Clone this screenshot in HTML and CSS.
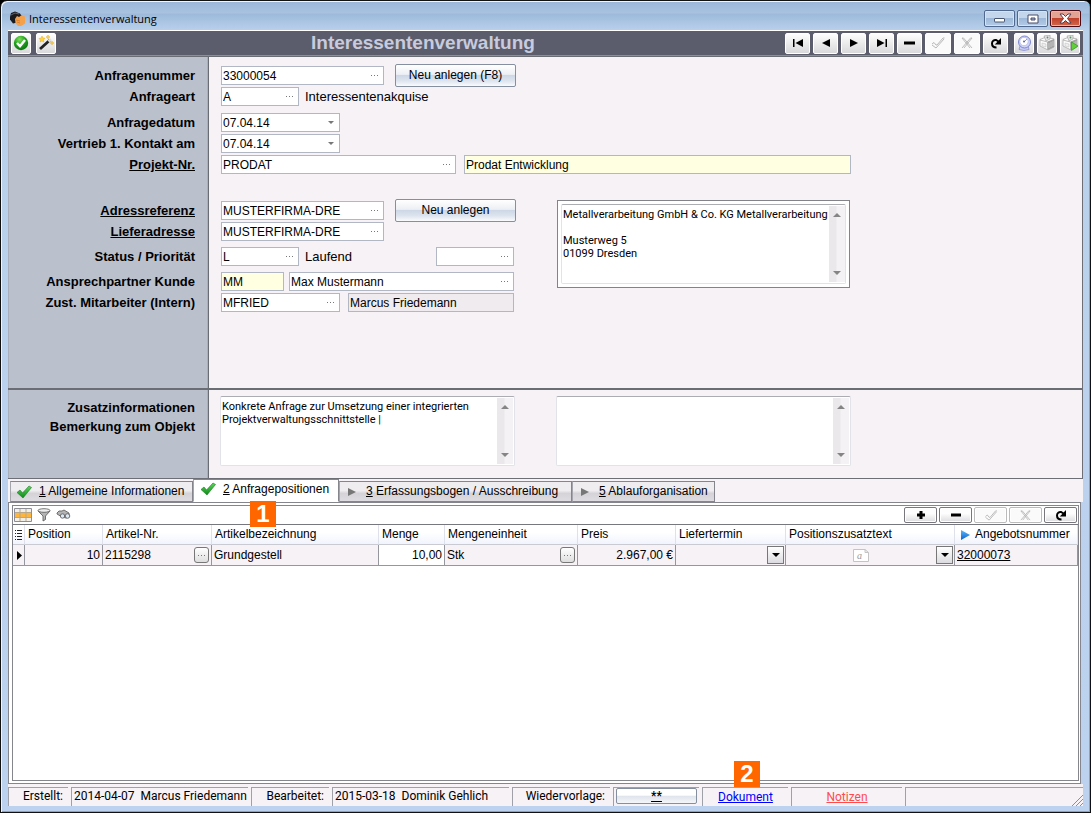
FILE: index.html
```html
<!DOCTYPE html>
<html lang="de">
<head>
<meta charset="utf-8">
<title>Interessentenverwaltung</title>
<link rel="stylesheet" href="styles.css">
</head>
<body>
<svg class="defs" width="0" height="0" aria-hidden="true">
  <defs>
    <radialGradient id="gGreen" cx=".4" cy=".25" r=".8"><stop offset="0" stop-color="#7ede5c"/><stop offset=".5" stop-color="#1fa01c"/><stop offset="1" stop-color="#0a6e10"/></radialGradient>
    <linearGradient id="gCheck" x1="0" y1="0" x2="0" y2="1"><stop offset="0" stop-color="#5fd45f"/><stop offset="1" stop-color="#0c8a18"/></linearGradient>
    <linearGradient id="gBlue" x1="0" y1="0" x2="0" y2="1"><stop offset="0" stop-color="#5db8f8"/><stop offset="1" stop-color="#0a62d0"/></linearGradient>
    <symbol id="check" viewBox="0 0 16 14"><path d="M1 7.500 4 5l2.500 3L13 1l2.500 1.500L7 13z" fill="url(#gCheck)" stroke="#1a7a20" stroke-width=".6"/></symbol>
    <symbol id="checkOff" viewBox="0 0 14 12"><path d="M1 7l2-1.500L5 8l1 0 6-7h1.500M1 8l4 3 8-9" fill="none" stroke="#b0b0b0" stroke-width=".9"/></symbol>
    <symbol id="crossOff" viewBox="0 0 12 12"><path d="M1 1h1.500l8.500 10M1 1l8 10M11 1H9.500L1 11M11 1 3 11" fill="none" stroke="#b4b4b4" stroke-width=".9"/></symbol>
    <symbol id="redo" viewBox="0 0 12 12"><path d="M6.500 10.500C3 10.500 2 8.500 2 6.500 2 4 4 2.700 6 3l2.500 1.500" fill="none" stroke="#000" stroke-width="2"/><path d="M11 1v6.500H4.800z"/></symbol>
    <symbol id="printer" viewBox="0 0 16 16"><path d="M1 4.500 7 2l8 2v8l-6 3-8-4z" fill="#fbfbfb" stroke="#aaa" stroke-width=".8"/><path d="M8.500 6.500 15 4v8l-6 3z" fill="#a2a2a2"/><path d="M10 8v5M12 7v5M14 6v5" stroke="#d8d8d8" stroke-width=".7"/><path d="M1 5l7.500 2V15" fill="none" stroke="#aaa" stroke-width=".8"/><path d="M3 8l4 1v3l-4-1z" fill="#eee" stroke="#bbb" stroke-width=".5"/><path d="M5 1l6-1v4L7 6z" fill="#e4e4e4" stroke="#999" stroke-width=".6"/><circle cx="8.500" cy="2.500" r=".9" fill="#4b9b5b"/></symbol>
    <symbol id="tri" viewBox="0 0 8 8"><path d="M0 0l8 4-8 4z" fill="#777"/></symbol>
  </defs>
</svg>
<main class="window">
  <header class="titlebar">
    <svg class="app-icon" width="17" height="16" viewBox="0 0 17 16"><path d="M1 6 2 2 6 .5l5 2 2 3-5 6-4 1-3-4z" fill="#1b1b1e"/><path d="M2 4l4-2 4 1" stroke="#666" fill="none"/><path d="M6 8l2-3 2 1 2-1.500 4 1v7l-4 2.500H9L6.500 12z" fill="#f5a04a"/><path d="M7 9l4 1M8 11l3 1" stroke="#c9742c" fill="none" stroke-width=".7"/></svg>
    <span class="title-text">Interessentenverwaltung</span>
    <div class="caption-buttons">
      <button class="cap" aria-label="Minimieren"><svg width="12" height="8" viewBox="0 0 12 8"><rect x=".5" y="3.500" width="10" height="3.500" rx=".5" fill="#fff" stroke="#4a5670"/></svg></button>
      <button class="cap" aria-label="Maximieren"><svg width="12" height="10" viewBox="0 0 12 10"><path fill-rule="evenodd" d="M1 1h10v8H1zM4 4v2h4V4z" fill="#fff" stroke="#4a4a66"/></svg></button>
      <button class="cap close" aria-label="Schließen"><svg width="13" height="11" viewBox="0 0 13 11"><path d="M1 1h3l2.500 2.500L9 1h3L8.500 5.500 12 10H9L6.500 7.500 4 10H1l3.500-4.500z" fill="#fff" stroke="#5c3a48"/></svg></button>
    </div>
  </header>

  <div class="toolbar">
    <button class="tool small" aria-label="OK"><svg width="16" height="16" viewBox="0 0 16 16"><circle cx="8" cy="8" r="7.200" fill="url(#gGreen)"/><path d="M4 8l3 3.200L12 5" fill="none" stroke="#fff" stroke-width="2.500"/></svg></button>
    <button class="tool small" aria-label="Assistent"><svg width="16" height="16" viewBox="0 0 16 16"><path d="M2 14 12 5" stroke="#222" stroke-width="2.800"/><path d="M10.500 6.500 13 4.200" stroke="#ddd" stroke-width="2.800"/><path d="M4 1l1 2 2 .2L5.500 5l.3 2L4 6 2 7l.4-2L1 3.500l2-.3zM10 0l.6 1.400L12 2l-1.400.6L10 4l-.6-1.400L8 2l1.400-.6zM14 6l.5 1.500L16 8l-1.500.5L14 10l-.5-1.500L12 8l1.500-.5z" fill="#ffd43a" stroke="#d79a14" stroke-width=".4"/></svg></button>
    <h1>Interessentenverwaltung</h1>
    <div class="nav">
      <button class="tool" aria-label="Erster"><svg width="12" height="10" viewBox="0 0 12 10"><path d="M1 1h1.500v8H1zM11 1v8L3.500 5z"/></svg></button>
      <button class="tool" aria-label="Zurück"><svg width="10" height="10" viewBox="0 0 10 10"><path d="M9 1v8L1 5z"/></svg></button>
      <button class="tool" aria-label="Weiter"><svg width="10" height="10" viewBox="0 0 10 10"><path d="M1 1v8l8-4z"/></svg></button>
      <button class="tool" aria-label="Letzter"><svg width="12" height="10" viewBox="0 0 12 10"><path d="M9.500 1H11v8H9.500zM1 1v8l7.500-4z"/></svg></button>
      <button class="tool" aria-label="Löschen"><svg width="12" height="4" viewBox="0 0 12 4"><path d="M0 .5h11v3H0z"/></svg></button>
      <button class="tool off" aria-label="Speichern"><svg width="14" height="12"><use href="#checkOff"/></svg></button>
      <button class="tool off" aria-label="Abbrechen"><svg width="12" height="12"><use href="#crossOff"/></svg></button>
      <button class="tool" aria-label="Aktualisieren"><svg width="12" height="12"><use href="#redo"/></svg></button>
    </div>
    <div class="extras">
      <button class="tool small" aria-label="Vorschau"><svg width="15" height="16" viewBox="0 0 15 16"><path d="M3 11l-1 3.500 5 1 5-1-1-4" fill="#c9cdf3" stroke="#8087cc" stroke-width=".7"/><circle cx="7.500" cy="7" r="6" fill="#d0d5fa" stroke="#7d86cf"/><circle cx="7" cy="6.500" r="4.200" fill="#fff" stroke="#aab0e0" stroke-width=".7"/><path d="M7 7l3-3" stroke="#777cc4" stroke-width=".8"/><circle cx="7" cy="6.500" r=".9" fill="#4a52b8"/></svg></button>
      <button class="tool small" aria-label="Drucken"><svg width="16" height="16"><use href="#printer"/></svg></button>
      <button class="tool small" aria-label="Direkt drucken"><svg width="16" height="16" viewBox="0 0 16 16"><use href="#printer" width="16" height="16"/><path d="M9.500 7v8.500L16 11z" fill="#62ce3a" stroke="#2f9a1d" stroke-width=".7"/></svg></button>
    </div>
  </div>

  <form class="form">
    <section class="section first">
      <div class="block">
        <div class="row"><label for="nr">Anfragenummer</label>
          <span class="field w163"><input id="nr" value="33000054"><button type="button" class="dots" aria-label="Auswahl"></button></span>
          <button type="button" class="action">Neu anlegen (F8)</button></div>
        <div class="row"><label for="art">Anfrageart</label>
          <span class="field w78"><input id="art" value="A"><button type="button" class="dots" aria-label="Auswahl"></button></span><span class="plain">Interessentenakquise</span></div>
        <div class="row gap-m"><label for="dat">Anfragedatum</label>
          <span class="field w119"><input id="dat" value="07.04.14"><button type="button" class="drop" aria-label="Kalender"></button></span></div>
        <div class="row"><label for="kon">Vertrieb 1. Kontakt am</label>
          <span class="field w119"><input id="kon" value="07.04.14"><button type="button" class="drop" aria-label="Kalender"></button></span></div>
        <div class="row"><label for="prj" class="link">Projekt-Nr.</label>
          <span class="field w235"><input id="prj" value="PRODAT"><button type="button" class="dots" aria-label="Auswahl"></button></span>
          <span class="field yellow w387"><input aria-label="Projektbezeichnung" value="Prodat Entwicklung"></span></div>
      </div>
      <div class="split">
        <div class="block rows2">
          <div class="row"><label for="adr" class="link">Adressreferenz</label>
            <span class="field w163"><input id="adr" value="MUSTERFIRMA-DRE"><button type="button" class="dots" aria-label="Auswahl"></button></span>
            <button type="button" class="action">Neu anlegen</button></div>
          <div class="row"><label for="lief" class="link">Lieferadresse</label>
            <span class="field w163"><input id="lief" value="MUSTERFIRMA-DRE"><button type="button" class="dots" aria-label="Auswahl"></button></span></div>
          <div class="row gap-s"><label for="sta">Status / Priorität</label>
            <span class="field w78"><input id="sta" value="L"><button type="button" class="dots" aria-label="Auswahl"></button></span><span class="plain">Laufend</span>
            <span class="field w78 push"><input aria-label="Priorität"><button type="button" class="dots" aria-label="Auswahl"></button></span></div>
          <div class="row gap-s near"><label for="asp">Ansprechpartner Kunde</label>
            <span class="field yellow w63"><input id="asp" value="MM"></span>
            <span class="field grow"><input aria-label="Name Ansprechpartner" value="Max Mustermann"><button type="button" class="dots" aria-label="Auswahl"></button></span></div>
          <div class="row"><label for="mit">Zust. Mitarbeiter (Intern)</label>
            <span class="field w119"><input id="mit" value="MFRIED"><button type="button" class="dots" aria-label="Auswahl"></button></span>
            <span class="field gray grow"><input aria-label="Name Mitarbeiter" value="Marcus Friedemann"></span></div>
        </div>
        <div class="address">
          <div class="memo"><textarea aria-label="Adresse">Metallverarbeitung GmbH &amp; Co. KG Metallverarbeitung

Musterweg 5
01099 Dresden</textarea><span class="scroll"><i class="up"></i><i class="down"></i></span></div>
        </div>
      </div>
    </section>
    <section class="section second">
      <div class="caption">
        <label for="zus">Zusatzinformationen</label>
        <label for="bem">Bemerkung zum Objekt</label>
      </div>
      <div class="memo note"><textarea id="zus">Konkrete Anfrage zur Umsetzung einer integrierten
Projektverwaltungsschnittstelle |</textarea><span class="scroll"><i class="up"></i><i class="down"></i></span></div>
      <div class="memo note"><textarea id="bem"></textarea><span class="scroll"><i class="up"></i><i class="down"></i></span></div>
    </section>
  </form>

  <nav class="tabs">
    <button class="tab t1"><svg width="16" height="14"><use href="#check"/></svg><span><u>1</u> Allgemeine Informationen</span></button>
    <button class="tab t2 active"><svg width="16" height="14"><use href="#check"/></svg><span><u>2</u> Anfragepositionen</span><b class="badge one">1</b></button>
    <button class="tab t3"><svg class="arrow" width="8" height="8"><use href="#tri"/></svg><span><u>3</u> Erfassungsbogen / Ausschreibung</span></button>
    <button class="tab t4"><svg class="arrow" width="8" height="8"><use href="#tri"/></svg><span><u>5</u> Ablauforganisation</span></button>
  </nav>

  <section class="panel">
    <div class="inner">
      <div class="gridbar">
        <button class="ico" aria-label="Tabelle"><svg width="18" height="14" viewBox="0 0 18 14"><path d="M.5.500h17v13H.5z" fill="#f2efe9" stroke="#8d8d95"/><path d="M1 4.500h16v5H1z" fill="#ffb43c"/><path d="M6 1v12M12 1v12M1 4.500h16M1 9.500h16" stroke="#b9a78a"/></svg></button>
        <button class="ico" aria-label="Filter"><svg width="14" height="14" viewBox="0 0 14 14"><path d="M1 3l5 5v5l2.500-1.500V8L13 3z" fill="#b4b4b4" stroke="#555" stroke-width=".8"/><ellipse cx="7" cy="2.500" rx="6" ry="1.800" fill="#eee" stroke="#555" stroke-width=".8"/></svg></button>
        <button class="ico" aria-label="Suchen"><svg width="15" height="12" viewBox="0 0 15 12"><path d="M1 4l2-2 3 0 2-1 5 3v4l-3 1-4-1-5-3z" fill="#b4b4b4" stroke="#555" stroke-width=".8"/><circle cx="6.500" cy="7" r="2.200" fill="#dce8f4" stroke="#555" stroke-width=".8"/><circle cx="11.500" cy="7" r="2.300" fill="#dce8f4" stroke="#555" stroke-width=".8"/></svg></button>
        <div class="rownav">
          <button class="mini" aria-label="Hinzufügen"><svg width="10" height="10" viewBox="0 0 10 10"><path d="M3.500 1h3v2.500H9v3H6.500V9h-3V6.500H1v-3h2.500z"/></svg></button>
          <button class="mini" aria-label="Entfernen"><svg width="10" height="4" viewBox="0 0 10 4"><path d="M0 .5h10v3H0z"/></svg></button>
          <button class="mini off" aria-label="Speichern"><svg width="14" height="11"><use href="#checkOff"/></svg></button>
          <button class="mini off" aria-label="Abbrechen"><svg width="11" height="11"><use href="#crossOff"/></svg></button>
          <button class="mini" aria-label="Aktualisieren"><svg width="12" height="12"><use href="#redo"/></svg></button>
        </div>
      </div>
      <table class="grid">
        <colgroup><col class="c0"><col class="c1"><col class="c2"><col class="c3"><col class="c4"><col class="c5"><col class="c6"><col class="c7"><col class="c8"><col></colgroup>
        <thead><tr>
          <th class="mark"><svg width="8" height="10" viewBox="0 0 8 10"><path d="M0 .5h1M2 .5h5M0 3.500h1M2 3.500h5M0 6.500h1M2 6.500h5M0 9.500h1M2 9.500h5" stroke="#222"/></svg></th>
          <th>Position</th><th>Artikel-Nr.</th><th>Artikelbezeichnung</th><th>Menge</th><th>Mengeneinheit</th><th>Preis</th><th>Liefertermin</th><th>Positionszusatztext</th>
          <th class="last"><svg width="10" height="10" viewBox="0 0 10 10"><path d="M1 0l9 5-9 5z" fill="url(#gBlue)"/></svg>Angebotsnummer</th>
        </tr></thead>
        <tbody><tr>
          <td class="mark"><svg width="5" height="9" viewBox="0 0 5 9"><path d="M0 0l5 4.500L0 9z"/></svg></td>
          <td class="num">10</td>
          <td><div class="cell">2115298<button class="more" aria-label="Artikel wählen"></button></div></td>
          <td>Grundgestell</td>
          <td class="num edit">10,00</td>
          <td><div class="cell">Stk<button class="more" aria-label="Einheit wählen"></button></div></td>
          <td class="num">2.967,00 €</td>
          <td><div class="cell end"><button class="combo" aria-label="Termin wählen"></button></div></td>
          <td><div class="cell mid"><svg width="16" height="13" viewBox="0 0 16 13"><path d="M.5.500H12l3.500 3v9H.5zM12 .5v3h3.500" fill="#fff" stroke="#c4c4c4"/><text x="4" y="10" class="glyph">a</text></svg><button class="combo" aria-label="Text wählen"></button></div></td>
          <td class="ref"><a href="#">32000073</a></td>
        </tr></tbody>
      </table>
    </div>
  </section>

  <footer class="status">
    <span class="s0 right">Erstellt:</span>
    <span class="s1">2014-04-07&nbsp; Marcus Friedemann</span>
    <span class="s2 right">Bearbeitet:</span>
    <span class="s3">2015-03-18&nbsp; Dominik Gehlich</span>
    <span class="s4 right">Wiedervorlage:</span>
    <span class="s5"><button class="stars"><u>**</u></button></span>
    <span class="s6 center"><a class="doc" href="#">Dokument</a><b class="badge two">2</b></span>
    <span class="s7 center"><a class="notes" href="#">Notizen</a></span>
    <span class="s8"><svg width="12" height="12" viewBox="0 0 12 12"><path d="M1 12 12 1M5 12l7-7M9 12l3-3" stroke="#8d8d95"/></svg></span>
  </footer>
</main>
</body>
</html>
```
FILE: styles.css
```css
* { box-sizing: border-box; }
body { margin: 0; background: #000; font: 12px/15px "Liberation Sans", Arial, sans-serif; color: #000; }
button, input, textarea { font: inherit; color: inherit; margin: 0; padding: 0; border: 0; background: none; }
button { display: flex; align-items: center; justify-content: center; flex: none; }
svg { display: block; flex: none; }
.defs { position: absolute; }

.window {
  display: flex; flex-direction: column; min-height: 100vh;
  border: 1px solid #111; border-radius: 7px 7px 0 0; padding: 0 7px 6px;
  background: linear-gradient(#9ab5d9, #a8c2e0 12px, #9dbadb 13px, #bad1ec 30px, #bcd2ee);
  box-shadow: inset 1px 1px 0 #eef5fc, inset -1px -1px 0 #37c6e4;
}

.titlebar { display: flex; align-items: center; height: 29px; padding: 6px 0 0 1px; }
.title-text { font: 11px/16px "Open Sans", sans-serif; margin-left: 3px; }
.caption-buttons { display: flex; gap: 2px; margin-left: auto; padding-right: 2px; }
.cap { width: 31px; height: 17px; border: 1px solid #52698f; border-radius: 2px; background: linear-gradient(#c4d6ec 50%, #9db8d8 50%, #b4cbe8); box-shadow: inset 0 0 0 1px #d5e3f4; }
.cap.close { border-color: #4d0c14; background: linear-gradient(#e3a394 50%, #c0412c 50%, #d2694c); box-shadow: inset 0 0 0 1px #e9b5a8; }

.toolbar { display: flex; align-items: center; height: 26px; padding: 0 3px; background: #5b5d6c; border-top: 1px solid #fff; border-bottom: 1px solid #8e8e96; }
.toolbar h1 { margin: 0 0 0 255px; font: bold 19px/22px "Liberation Sans", Arial, sans-serif; color: #c8cbdd; }
.tool { width: 25px; height: 21px; border: 1px solid #fff; border-radius: 2px; background: linear-gradient(#fdfdfd, #d9d9dc); }
.tool.small { width: 20px; }
.tool.small + .tool.small { margin-left: 5px; }
.tool.off { width: 26px; background: #fafafa; }
.nav { display: flex; gap: 3px; margin-left: auto; }
.extras { display: flex; margin-left: 6px; }
.extras .tool.small + .tool.small { margin-left: 3px; }

.form { border-right: 1px solid #6e6e76; border-bottom: 1px solid #6e6e76; }
.section { background: linear-gradient(to right, #a9aebb 1px, #bac1cd 1px 199px, #a9aebb 199px 200px, #6a6d73 200px 201px, #f6f2f6 201px); }
.first { min-height: 334px; padding-top: 9px; border-top: 1px solid #6a6d73; border-bottom: 2px solid #6a6d73; }
.block { display: flex; flex-direction: column; gap: 2px; }
.split { display: flex; align-items: flex-start; gap: 43px; margin-top: 26px; }
.rows2 { width: 506px; padding-top: 1px; }
.row { display: flex; align-items: center; gap: 8px; height: 19px; }
.row.gap-s { margin-top: 4px; }
.row.gap-m { margin-top: 5px; }
.row.near { gap: 5px; }
.row > label { width: 187px; margin-right: 18px; flex: none; text-align: right; font-weight: bold; font-size: 13px; }
.row.near > label { margin-right: 21px; }
label.link { text-decoration: underline; }
.field { display: flex; flex: none; align-items: center; height: 19px; border: 1px solid #b1b7c3; background: #fff; }
.field input { flex: 1; min-width: 0; width: 0; height: 17px; padding-left: 1px; outline: none; }
.w63 { width: 63px; } .w78 { width: 78px; } .w119 { width: 119px; } .w163 { width: 163px; }
.w235 { width: 235px; } .w387 { width: 387px; }
.field.grow { flex: 1; }
.push { margin-left: auto; }
.yellow { background: #ffffe1; }
.gray { background: #f0ebef; }
.plain { font-size: 13px; margin-left: -2px; }
.dots { width: 17px; height: 17px; }
.dots::before, .more::before { content: ""; width: 8px; height: 1px; background: repeating-linear-gradient(to right, #777 0 1px, transparent 1px 3px); }
.drop { width: 17px; height: 17px; }
.drop::before { content: ""; border: 3px solid transparent; border-top-color: #777; border-bottom: 0; }
.action { width: 121px; height: 23px; margin-left: 3px; border: 1px solid #858f9f; border-radius: 2px; background: linear-gradient(#fff, #eceff4 45%, #ccd6e6 48%, #dde4ee 75%, #fafbfd); }

.memo { display: flex; background: #fff; border: 1px solid #e2e3ea; border-top-color: #abadb3; border-radius: 2px; }
.memo textarea { flex: 1; min-width: 0; padding: 3px 0 0 1px; resize: none; outline: none; overflow: hidden; white-space: pre; font: 11px/13px Roboto, sans-serif; }
.scroll { display: flex; flex: none; flex-direction: column; justify-content: space-between; align-items: center; width: 16px; margin: 1px; padding: 7px 0; background: linear-gradient(to right, #ebe8eb 7px, #f5f2f5 8px); }
.scroll i { border: 4px solid transparent; }
.scroll .up { border-bottom-color: #858585; border-top: 0; }
.scroll .down { border-top-color: #858585; border-bottom: 0; }
.address { width: 293px; height: 88px; padding: 3px; border: 1px solid #83838b; background: #fff; }
.address .memo { height: 80px; }
.address .scroll { margin-right: 0; }
.second { display: flex; align-items: flex-start; min-height: 88px; padding-top: 6px; }
.caption { display: flex; flex-direction: column; gap: 4px; width: 187px; margin-right: 25px; padding-top: 4px; text-align: right; font: bold 13px/15px "Liberation Sans", Arial, sans-serif; }
.note { width: 295px; height: 70px; margin-right: 41px; }

.tabs { display: flex; align-items: flex-end; height: 23px; padding-left: 2px; background: #f6f2f6; }
.tab { position: relative; justify-content: flex-start; gap: 7px; height: 21px; padding: 0 4px 0 5px; border: 1px solid #85858d; border-left-color: #a5a5ad; background: linear-gradient(to bottom, #f0edf0 45%, #d5d3d7 60%, #dedce0); white-space: nowrap; }
.tab.active { height: 23px; padding: 0 7px 3px 6px; background: #fff; border-bottom-color: #fff; }
.tab .arrow { margin: 0 3px; }
.t1 { min-width: 183px; } .t2 { min-width: 146px; } .t3 { min-width: 233px; } .t4 { min-width: 143px; }
.badge { display: flex; align-items: center; justify-content: center; position: absolute; z-index: 2; width: 26px; height: 26px; background: #f60; color: #fff; font: bold 24px/26px "Liberation Sans", Arial, sans-serif; }
.badge.one { left: 56px; top: 21px; }
.badge.two { left: 31px; top: -27px; }

.panel { display: flex; flex: 1; flex-direction: column; margin-right: 2px; padding: 2px 1px 2px 3px; border: 1px solid #85858d; background: #fff; }
.inner { flex: 1; border: 1px solid #85858d; }
.gridbar { display: flex; align-items: center; height: 18px; gap: 5px; padding-left: 1px; }
.rownav { display: flex; gap: 2px; margin: 0 1px 0 auto; }
.mini { width: 33px; height: 16px; border: 1px solid #77777d; border-radius: 2px; background: linear-gradient(#fdfdfd 40%, #dcdcdf); box-shadow: inset 0 0 0 1px #fff; }
.mini.off { border-color: #bbb; background: #fafafa; }

.grid { width: 100%; table-layout: fixed; border-collapse: separate; border-spacing: 0; border-top: 1px solid #77777f; }
.grid th, .grid td { padding: 0 2px; text-align: left; font-weight: normal; white-space: nowrap; }
.grid th { height: 20px; padding: 0 3px; background: linear-gradient(#fff 40%, #f1f4fd); border-right: 1px solid #dfe1ea; border-bottom: 1px solid #c9cad2; }
.grid td { height: 21px; background: #f6f2f6; border-right: 1px solid #96969e; border-bottom: 1px solid #96969e; }
.grid .mark { padding: 0 2px; }
.grid td.mark { padding-left: 4px; }
.grid .num { text-align: right; padding-right: 2px; }
.grid .edit { background: #fff; }
.c0 { width: 12px; } .c1 { width: 78px; } .c2 { width: 109px; } .c3 { width: 167px; } .c4 { width: 66px; }
.c5 { width: 133px; } .c6 { width: 98px; } .c7 { width: 110px; } .c8 { width: 169px; }
.grid th.last { padding-left: 5px; }
.last svg { display: inline-block; margin-right: 5px; vertical-align: middle; }
.cell { display: flex; align-items: center; justify-content: space-between; }
.cell.end { justify-content: flex-end; }
.cell.mid svg { margin-left: 65px; }
.more { width: 15px; height: 16px; border: 1px solid #777; border-radius: 3px; background: linear-gradient(#fff, #dedede); }
.combo { width: 17px; height: 18px; margin-right: -1px; border: 1px solid #777; background: linear-gradient(#fff, #dcdce0); }
.combo::before { content: ""; border: 4px solid transparent; border-top-color: #000; border-bottom: 0; }
.glyph { font: italic 10px "Liberation Serif", serif; fill: #999; }
.grid a { color: #000; }

.status { display: flex; gap: 3px; height: 22px; padding-top: 3px; background: #f6f2f6; font: 12px/16px Roboto, sans-serif; white-space: nowrap; }
.status > span { position: relative; flex: none; height: 19px; padding: 0 2px; border-top: 1px solid #a0a0a8; border-left: 1px solid #a0a0a8; }
.status .right { text-align: right; padding-right: 5px; }
.status .center { text-align: center; }
.s0 { width: 60px; } .s1 { width: 177px; } .s2 { width: 78px; } .s3 { width: 177px; } .s4 { width: 98px; }
.s5 { width: 86px; } .s6 { width: 86px; } .s7 { width: 111px; }
.status > .s8 { flex: 1; display: flex; justify-content: flex-end; align-items: flex-end; padding: 0; }
.stars { width: 100%; height: 16px; border: 1px solid #858f9f; border-radius: 2px; background: linear-gradient(#fff 45%, #dfe4ec 50%, #f4f6f9); font-weight: bold; }
.status a { line-height: 18px; }
.doc { color: #00f; }
.notes { color: #ff4b4b; }
```
